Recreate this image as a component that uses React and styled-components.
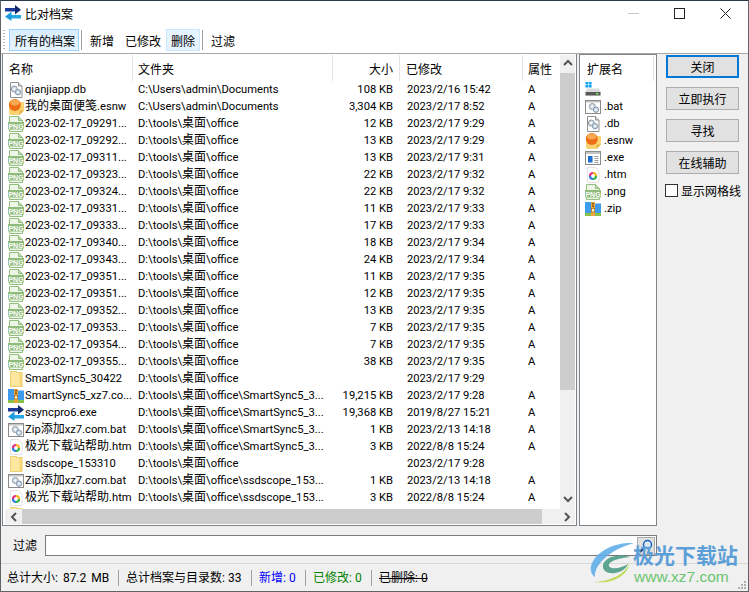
import React from 'react'
import styled, { createGlobalStyle } from 'styled-components'

const GlobalStyle = createGlobalStyle`
  html, body { margin: 0; padding: 0; background: #f0f0f0; }
  body {
    font-family: Roboto, "Noto Sans CJK SC", sans-serif;
    font-size: 12px;
    color: #000;
  }
`

const Window = styled.div`
  position: relative;
  width: 749px;
  height: 592px;
  box-sizing: border-box;
  display: flex;
  flex-direction: column;
  background: #f0f0f0;
  border-top: 1px solid #2b3a4a;
  border-right: 1px solid #5f6468;
  border-bottom: 1px solid #5f6468;
  border-left: 1px solid #5f6468;
  overflow: hidden;
`

const TitleBar = styled.div`
  height: 24px;
  flex: none;
  display: flex;
  align-items: center;
  padding-left: 4px;
  background: #fff;
`

const TitleText = styled.span`
  margin-left: 4px;
  margin-top: 1px;
`

const WindowControls = styled.div`
  margin-left: auto;
  display: flex;
  align-items: center;
  height: 100%;
`

const ControlButton = styled.div`
  width: 46px;
  height: 24px;
  display: flex;
  align-items: center;
  justify-content: center;
  color: ${p => (p.$dim ? '#c8c8c8' : '#222')};
`

const Toolbar = styled.div`
  height: 29px;
  flex: none;
  display: flex;
  align-items: center;
  box-sizing: border-box;
  padding: 2px 0 0 2px;
  background: #fff;
  border-bottom: 1px solid #a8a8a8;
`

const Gripper = styled.div`
  width: 2px;
  height: 20px;
  margin-right: 4px;
  background: repeating-linear-gradient(to bottom, #b4b4b4 0 1px, transparent 1px 3px);
`

const ToolButton = styled.div`
  height: 22px;
  box-sizing: border-box;
  display: flex;
  align-items: center;
  padding: 0 ${p => p.$padRight ?? p.$pad ?? 7}px 0 ${p => p.$pad ?? 7}px;
  border: 1px solid ${p => (p.$active ? '#99d1ff' : p.$hover ? '#cce8ff' : 'transparent')};
  background: ${p => (p.$active ? 'linear-gradient(#d8edff, #e8f4ff)' : p.$hover ? '#e5f3ff' : 'transparent')};
`

const ToolSeparator = styled.div`
  width: 1px;
  height: 20px;
  margin-left: 2px;
  background: #a0a0a0;
`

const Main = styled.div`
  height: 472px;
  flex: none;
  display: flex;
  padding-left: 1px;
`

const FileList = styled.div`
  width: 575px;
  flex: none;
  box-sizing: border-box;
  display: flex;
  flex-direction: column;
  padding-top: 1px;
  background: #fff;
  border-right: 1px solid #7f8488;
  border-bottom: 1px solid #7f8488;
  border-left: 1px solid #7f8488;
`

const ListBody = styled.div`
  flex: 1;
  min-height: 0;
  display: flex;
  padding-left: 2px;
  padding-right: 1px;
`

const ListColumn = styled.div`
  flex: 1;
  min-width: 0;
  overflow: hidden;
`

const columns = '128px 200px 67px 123px 37px'

const HeaderRow = styled.div`
  display: grid;
  grid-template-columns: ${columns};
  height: 26px;
`

const HeaderCell = styled.div`
  display: flex;
  align-items: center;
  justify-content: ${p => (p.$right ? 'flex-end' : 'flex-start')};
  box-sizing: border-box;
  padding: 0 ${p => (p.$right ? 6 : 5)}px 0 ${p => p.$pad ?? 5}px;
  border-right: ${p => (p.$last ? 0 : '1px solid #e5e5e5')};
`

const Row = styled.div`
  display: grid;
  grid-template-columns: ${columns};
  height: 17px;
  line-height: 17px;
  font-size: 11.2px;
  white-space: nowrap;
`

const Cjk = styled.span`
  font-size: 12px;
`

const NameCell = styled.div`
  display: flex;
  align-items: center;
  padding-left: 3px;
  overflow: hidden;
`

const IconSlot = styled.span`
  width: 16px;
  height: 16px;
  flex: none;
  margin-right: 1px;
  display: block;
  svg { display: block; }
`

const Cell = styled.div`
  padding-left: ${p => p.$pad ?? 5}px;
  padding-right: ${p => (p.$right ? 7 : 0)}px;
  text-align: ${p => (p.$right ? 'right' : 'left')};
  overflow: hidden;
`

const VScroll = styled.div`
  width: 15px;
  flex: none;
  display: flex;
  flex-direction: column;
  background: #f0f0f0;
`

const HScroll = styled.div`
  height: 15px;
  flex: none;
  display: flex;
  margin: 0 1px 1px 2px;
  background: #f0f0f0;
`

const ScrollArrow = styled.div`
  width: ${p => (p.$horizontal ? 17 : 15)}px;
  height: ${p => (p.$horizontal ? 15 : 18)}px;
  flex: none;
  display: flex;
  align-items: center;
  justify-content: center;
  color: #555;
`

const ScrollThumb = styled.div`
  flex: none;
  background: #cdcdcd;
  ${p => (p.$horizontal ? `width: ${p.$size}px;` : `height: ${p.$size}px;`)}
`

const ScrollTrack = styled.div`
  flex: 1;
`

const ExtList = styled.div`
  width: 78px;
  flex: none;
  box-sizing: border-box;
  margin-left: 2px;
  background: #fff;
  border: 1px solid #7f8488;
`

const ExtHeader = styled.div`
  height: 26px;
  width: 74px;
  box-sizing: border-box;
  display: flex;
  align-items: center;
  padding-left: 7px;
  border-right: 1px solid #e5e5e5;
`

const ExtRow = styled.div`
  height: 17px;
  line-height: 18px;
  font-size: 11.2px;
  display: flex;
  align-items: center;
  padding-left: 5px;
  white-space: nowrap;
`

const ExtLabel = styled.span`
  margin-left: 2px;
`

const SidePanel = styled.div`
  flex: 1;
  display: flex;
  flex-direction: column;
  align-items: flex-start;
  padding: 1px 0 0 8px;
`

const ActionButton = styled.button`
  width: 73px;
  height: 23px;
  box-sizing: border-box;
  margin: 0 0 9px 1px;
  padding: 0;
  font: inherit;
  color: #000;
  background: #e1e1e1;
  border: ${p => (p.$primary ? '2px solid #0078d7' : '1px solid #adadad')};
`

const CheckRow = styled.label`
  display: flex;
  align-items: center;
  height: 14px;
  white-space: nowrap;
`

const CheckBox = styled.span`
  width: 11px;
  height: 11px;
  flex: none;
  margin-right: 3px;
  background: #fff;
  border: 1px solid #333;
`

const FilterRow = styled.div`
  height: 37px;
  flex: none;
  display: flex;
  align-items: center;
  padding: 0 0 0 12px;
`

const FilterInput = styled.div`
  width: 612px;
  height: 21px;
  box-sizing: border-box;
  margin-left: 8px;
  margin-top: 1px;
  display: flex;
  justify-content: flex-end;
  padding: 1px;
  background: #fff;
  border: 1px solid #7a7a7a;
`

const SearchButton = styled.div`
  width: 18px;
  height: 18px;
  display: flex;
  align-items: center;
  justify-content: center;
  background: #e1e1e1;
  border: 1px solid #adadad;
  box-sizing: border-box;
`

const StatusBar = styled.div`
  flex: 1;
  display: flex;
  align-items: center;
  padding-left: 6px;
  border-top: 1px solid #d9d9d9;
`

const StatusItem = styled.div`
  height: 16px;
  line-height: 16px;
  white-space: nowrap;
  box-sizing: border-box;
  width: ${p => p.$width}px;
  color: ${p => p.$color || '#000'};
  word-spacing: ${p => p.$wordGap ?? 0}px;
  text-decoration: ${p => (p.$strike ? 'line-through' : 'none')};
  border-right: ${p => (p.$last ? 0 : '1px solid #a0a0a0')};
  margin-right: ${p => (p.$last ? 0 : 7)}px;
`

const Watermark = styled.div`
  position: absolute;
  right: 6px;
  bottom: 4px;
  width: 152px;
  height: 50px;
  pointer-events: none;
`

const WatermarkLogo = styled.svg`
  position: absolute;
  left: 0;
  top: 5px;
`

const WatermarkName = styled.div`
  position: absolute;
  left: 43px;
  top: 4px;
  font-family: "Noto Sans CJK SC", sans-serif;
  font-weight: 700;
  font-size: 21px;
  line-height: 26px;
  color: #5c9fd8;
  white-space: nowrap;
`

const WatermarkUrl = styled.div`
  position: absolute;
  left: 44px;
  top: 31px;
  font-family: "Liberation Sans", sans-serif;
  font-size: 15.5px;
  line-height: 18px;
  color: #6cc46f;
  white-space: nowrap;
`

const ResizeGrip = styled.svg`
  position: absolute;
  right: 1px;
  bottom: 1px;
`

const SyncIcon = () => (
  <svg width="16" height="16" viewBox="0 0 16 16">
    <rect x="0" y="3" width="11" height="3.5" fill="#1c3a96" />
    <path d="M10 0l6 4.7L10 9.5z" fill="#10286e" />
    <rect x="5" y="10" width="11" height="3.5" fill="#27a7e4" />
    <path d="M6.5 6.5L0 11.7 6.5 16z" fill="#1f9bdc" />
  </svg>
)

const Gears = ({ x = 0, y = 0 }) => (
  <g transform={`translate(${x} ${y})`}>
    <circle cx="6.3" cy="7" r="3" fill="#d5dee6" stroke="#8d9aa6" />
    <circle cx="6.3" cy="7" r="1" fill="#fff" />
    <circle cx="10" cy="10.2" r="2.7" fill="#c9d8e6" stroke="#8599ad" />
    <circle cx="10" cy="10.2" r="0.9" fill="#fff" />
  </g>
)

const DbIcon = () => (
  <svg width="16" height="16" viewBox="0 0 16 16">
    <path d="M2.5.5h8l3.5 3.5v11.5h-11.5z" fill="#fff" stroke="#8f8f8f" />
    <path d="M10.5.5v3.5h3.5" fill="#e0e0e0" stroke="#8f8f8f" />
    <Gears />
  </svg>
)

const NoteIcon = () => (
  <svg width="16" height="16" viewBox="0 0 16 16">
    <path d="M1 3h15v8.5L11.5 16H3a2 2 0 0 1-2-2z" fill="#f9d470" />
    <path d="M11.5 16l4.5-4.5h-4.5z" fill="#e9b247" />
    <circle cx="6.8" cy="6" r="6" fill="#ee6f17" />
    <ellipse cx="6.8" cy="3.6" rx="4.6" ry="3" fill="#f9a94f" />
  </svg>
)

const PngIcon = () => (
  <svg width="16" height="16" viewBox="0 0 16 16">
    <path d="M1.5.5h9l4 4v11h-13z" fill="#edf6e6" stroke="#93bf80" />
    <path d="M10.5.5v4h4" fill="#bcd9ab" stroke="#93bf80" />
    <rect x="0" y="6" width="16" height="7.5" fill="#8fbb7c" />
    <text x="8" y="12.5" fontSize="7" fontWeight="700" textAnchor="middle" fill="#fff" fontFamily="Liberation Sans, sans-serif">PNG</text>
  </svg>
)

const FolderIcon = () => (
  <svg width="16" height="16" viewBox="0 0 16 16">
    <path d="M2 0h7v1h5.5v15H2z" fill="#fce79f" />
    <path d="M2.5.5h6v1h5.5v14H2.5z" fill="none" stroke="#edcf74" />
    <rect x="11.5" y="1.5" width="2.5" height="14" fill="#f6d679" />
  </svg>
)

const ZipIcon = () => (
  <svg width="16" height="16" viewBox="0 0 16 16">
    <path d="M0 1h6l1 1.5h9V15H0z" fill="#3d9cec" />
    <rect x="0" y="12" width="16" height="3" fill="#86c24b" />
    <rect x="6" y="1" width="4" height="14" fill="#eaa63e" />
    <rect x="6.5" y="7.5" width="3" height="3.5" fill="#fff2c8" stroke="#a5661a" strokeWidth="0.7" />
    <rect x="7" y="2" width="2" height="1.5" fill="#8a5413" />
    <rect x="7" y="4.5" width="2" height="1.5" fill="#8a5413" />
  </svg>
)

const BatIcon = () => (
  <svg width="16" height="16" viewBox="0 0 16 16">
    <rect x="0.5" y="1.5" width="15" height="13" fill="#fff" stroke="#8a8a8a" />
    <rect x="1" y="2" width="14" height="1.5" fill="#c4c4c4" />
    <Gears x="1" y="0.5" />
  </svg>
)

const HtmIcon = () => (
  <svg width="16" height="16" viewBox="0 0 16 16">
    <path d="M2.5.5h8l3.5 3.5v11.5h-11.5z" fill="#fff" stroke="#e2e2e2" />
    <g fill="none" strokeWidth="2.2">
      <path d="M8 6a3 3 0 0 1 3 3" stroke="#f4b81e" />
      <path d="M11 9a3 3 0 0 1-3 3" stroke="#35b44a" />
      <path d="M8 12a3 3 0 0 1-3-3" stroke="#2f7de0" />
      <path d="M5 9a3 3 0 0 1 3-3" stroke="#e8308a" />
    </g>
  </svg>
)

const ExeIcon = () => (
  <svg width="16" height="16" viewBox="0 0 16 16">
    <rect x="0.5" y="1.5" width="15" height="13" fill="#fff" stroke="#8a8a8a" />
    <rect x="1" y="2" width="14" height="2" fill="#c4c4c4" />
    <rect x="3" y="6" width="4.5" height="6.5" fill="#1a6fd0" />
    <path d="M9.5 6.5h4M9.5 8.5h4M9.5 10.5h4M9.5 12.5h4" stroke="#9a9a9a" />
  </svg>
)

const DriveIcon = () => (
  <svg width="16" height="16" viewBox="0 0 16 16">
    <g fill="#12a5ef">
      <rect x="0.5" y="0" width="2.8" height="2.5" />
      <rect x="3.8" y="0" width="2.8" height="2.5" />
      <rect x="0.5" y="3" width="2.8" height="2.5" />
      <rect x="3.8" y="3" width="2.8" height="2.5" />
    </g>
    <path d="M2 6.5h12l1.5 3v4H.5v-4z" fill="#dcdcdc" />
    <rect x="0.5" y="10" width="15" height="3.5" fill="#5a5a5a" />
    <rect x="11" y="11" width="2.5" height="1.5" fill="#74e05e" />
  </svg>
)

const icons = {
  db: DbIcon,
  note: NoteIcon,
  png: PngIcon,
  folder: FolderIcon,
  zip: ZipIcon,
  sync: SyncIcon,
  bat: BatIcon,
  htm: HtmIcon,
  exe: ExeIcon,
  drive: DriveIcon,
}

const FileIcon = ({ kind }) => {
  const Icon = icons[kind]
  return <IconSlot>{Icon && <Icon />}</IconSlot>
}

const Chevron = ({ dir }) => {
  const paths = {
    up: 'M1 6l4-4 4 4',
    down: 'M1 2l4 4 4-4',
    left: 'M7 1L3 5l4 4',
    right: 'M3 1l4 4-4 4',
  }
  return (
    <svg width="10" height="10" viewBox="0 0 10 10">
      <path d={paths[dir]} fill="none" stroke="currentColor" strokeWidth="2" />
    </svg>
  )
}

// the list draws latin text a size smaller than chinese
const MixedText = ({ children }) => (
  <span>
    {children.split(/([\u4e00-\u9fff]+)/).map((part, i) => (
      i % 2 ? <Cjk key={i}>{part}</Cjk> : part
    ))}
  </span>
)

const office = 'D:\\tools\\桌面\\office'
const docs = 'C:\\Users\\admin\\Documents'
const sync = `${office}\\SmartSync5_3...`
const scope = `${office}\\ssdscope_153...`

const shot = (id, size, time) => ({
  kind: 'png',
  name: `2023-02-17_${id}...`,
  folder: office,
  size,
  date: `2023/2/17 ${time}`,
  attr: 'A',
})

const files = [
  { kind: 'db', name: 'qianjiapp.db', folder: docs, size: '108 KB', date: '2023/2/16 15:42', attr: 'A' },
  { kind: 'note', name: '我的桌面便笺.esnw', folder: docs, size: '3,304 KB', date: '2023/2/17 8:52', attr: 'A' },
  shot('09291', '12 KB', '9:29'),
  shot('09292', '13 KB', '9:29'),
  shot('09311', '13 KB', '9:31'),
  shot('09323', '22 KB', '9:32'),
  shot('09324', '22 KB', '9:32'),
  shot('09331', '11 KB', '9:33'),
  shot('09333', '17 KB', '9:33'),
  shot('09340', '18 KB', '9:34'),
  shot('09343', '24 KB', '9:34'),
  shot('09351', '11 KB', '9:35'),
  shot('09351', '12 KB', '9:35'),
  shot('09352', '13 KB', '9:35'),
  shot('09353', '7 KB', '9:35'),
  shot('09354', '7 KB', '9:35'),
  shot('09355', '38 KB', '9:35'),
  { kind: 'folder', name: 'SmartSync5_30422', folder: office, size: '', date: '2023/2/17 9:29', attr: '' },
  { kind: 'zip', name: 'SmartSync5_xz7.co...', folder: sync, size: '19,215 KB', date: '2023/2/17 9:28', attr: 'A' },
  { kind: 'sync', name: 'ssyncpro6.exe', folder: sync, size: '19,368 KB', date: '2019/8/27 15:21', attr: 'A' },
  { kind: 'bat', name: 'Zip添加xz7.com.bat', folder: sync, size: '1 KB', date: '2023/2/13 14:18', attr: 'A' },
  { kind: 'htm', name: '极光下载站帮助.htm', folder: sync, size: '3 KB', date: '2022/8/8 15:24', attr: 'A' },
  { kind: 'folder', name: 'ssdscope_153310', folder: office, size: '', date: '2023/2/17 9:28', attr: '' },
  { kind: 'bat', name: 'Zip添加xz7.com.bat', folder: scope, size: '1 KB', date: '2023/2/13 14:18', attr: 'A' },
  { kind: 'htm', name: '极光下载站帮助.htm', folder: scope, size: '3 KB', date: '2022/8/8 15:24', attr: 'A' },
  { kind: 'folder', name: '', folder: '', size: '', date: '', attr: '' },
]

const extensions = [
  { kind: 'drive', label: '' },
  { kind: 'bat', label: '.bat' },
  { kind: 'db', label: '.db' },
  { kind: 'note', label: '.esnw' },
  { kind: 'exe', label: '.exe' },
  { kind: 'htm', label: '.htm' },
  { kind: 'png', label: '.png' },
  { kind: 'zip', label: '.zip' },
]

const App = () => (
  <Window>
    <GlobalStyle />
    <TitleBar>
      <SyncIcon />
      <TitleText>比对档案</TitleText>
      <WindowControls>
        <ControlButton $dim>
          <svg width="11" height="11" viewBox="0 0 11 11"><path d="M0 5.5h11" stroke="currentColor" /></svg>
        </ControlButton>
        <ControlButton>
          <svg width="11" height="11" viewBox="0 0 11 11"><rect x="0.5" y="0.5" width="10" height="10" fill="none" stroke="currentColor" /></svg>
        </ControlButton>
        <ControlButton>
          <svg width="11" height="11" viewBox="0 0 11 11"><path d="M0.5 0.5l10 10M10.5 0.5l-10 10" stroke="currentColor" /></svg>
        </ControlButton>
      </WindowControls>
    </TitleBar>
    <Toolbar>
      <Gripper />
      <ToolButton $active $pad={5} $padRight={3}>所有的档案</ToolButton>
      <ToolSeparator />
      <ToolButton>新增</ToolButton>
      <ToolButton $pad={2} $padRight={4}>已修改</ToolButton>
      <ToolButton $hover $pad={4}>删除</ToolButton>
      <ToolSeparator />
      <ToolButton>过滤</ToolButton>
    </Toolbar>
    <Main>
      <FileList>
        <ListBody>
          <ListColumn>
            <HeaderRow>
              <HeaderCell $pad={4}>名称</HeaderCell>
              <HeaderCell>文件夹</HeaderCell>
              <HeaderCell $right>大小</HeaderCell>
              <HeaderCell $pad={6}>已修改</HeaderCell>
              <HeaderCell $last>属性</HeaderCell>
            </HeaderRow>
            {files.map((file, i) => (
              <Row key={i}>
                <NameCell>
                  <FileIcon kind={file.kind} />
                  <MixedText>{file.name}</MixedText>
                </NameCell>
                <Cell><MixedText>{file.folder}</MixedText></Cell>
                <Cell $right>{file.size}</Cell>
                <Cell $pad={7}>{file.date}</Cell>
                <Cell>{file.attr}</Cell>
              </Row>
            ))}
          </ListColumn>
          <VScroll>
            <ScrollArrow><Chevron dir="up" /></ScrollArrow>
            <ScrollThumb $size={317} />
            <ScrollTrack />
            <ScrollArrow><Chevron dir="down" /></ScrollArrow>
          </VScroll>
        </ListBody>
        <HScroll>
          <ScrollArrow $horizontal><Chevron dir="left" /></ScrollArrow>
          <ScrollThumb $horizontal $size={520} />
          <ScrollTrack />
          <ScrollArrow $horizontal><Chevron dir="right" /></ScrollArrow>
        </HScroll>
      </FileList>
      <ExtList>
        <ExtHeader>扩展名</ExtHeader>
        {extensions.map(ext => (
          <ExtRow key={ext.kind}>
            <FileIcon kind={ext.kind} />
            <ExtLabel>{ext.label}</ExtLabel>
          </ExtRow>
        ))}
      </ExtList>
      <SidePanel>
        <ActionButton $primary>关闭</ActionButton>
        <ActionButton>立即执行</ActionButton>
        <ActionButton>寻找</ActionButton>
        <ActionButton>在线辅助</ActionButton>
        <CheckRow>
          <CheckBox />
          显示网格线
        </CheckRow>
      </SidePanel>
    </Main>
    <FilterRow>
      过滤
      <FilterInput>
        <SearchButton>
          <svg width="14" height="14" viewBox="0 0 14 14">
            <circle cx="8.5" cy="5.5" r="4" fill="#dbe9f7" stroke="#1d63b8" strokeWidth="1.5" />
            <path d="M5.5 8.5L1 13" stroke="#12386e" strokeWidth="2" />
          </svg>
        </SearchButton>
      </FilterInput>
    </FilterRow>
    <StatusBar>
      <StatusItem $width={112} $wordGap={2}>总计大小: 87.2 MB</StatusItem>
      <StatusItem $width={126}>总计档案与目录数: 33</StatusItem>
      <StatusItem $width={47} $color="#0000ff">新增: 0</StatusItem>
      <StatusItem $width={59} $color="#008000">已修改: 0</StatusItem>
      <StatusItem $last $strike $width={60}>已删除: 0</StatusItem>
    </StatusBar>
    <Watermark>
      <WatermarkLogo width="46" height="42" viewBox="0 0 46 42">
        <path d="M44 1C26 0 6 8 1 24c-1 5 1 9 4 11-1-12 14-27 39-34z" fill="#62aee8" opacity="0.9" />
        <path d="M40 15c-12-4-25 0-27 8-1 6 5 9 12 8 6-1 11-4 13-9-5 3-11 5-16 4-4-1-4-4-1-6 5-3 11-4 19-5z" fill="#4d9c86" opacity="0.9" />
        <path d="M40 20c-3 10-16 19-36 20 16 2 33-4 36-20z" fill="#bcd94a" opacity="0.95" />
      </WatermarkLogo>
      <WatermarkName>极光下载站</WatermarkName>
      <WatermarkUrl>www.xz7.com</WatermarkUrl>
    </Watermark>
    <ResizeGrip width="9" height="9" viewBox="0 0 9 9">
      <path d="M6 0h2v2H6zM3 3h2v2H3zM6 3h2v2H6zM0 6h2v2H0zM3 6h2v2H3zM6 6h2v2H6z" fill="#b0b0b0" />
    </ResizeGrip>
  </Window>
)

export default App
